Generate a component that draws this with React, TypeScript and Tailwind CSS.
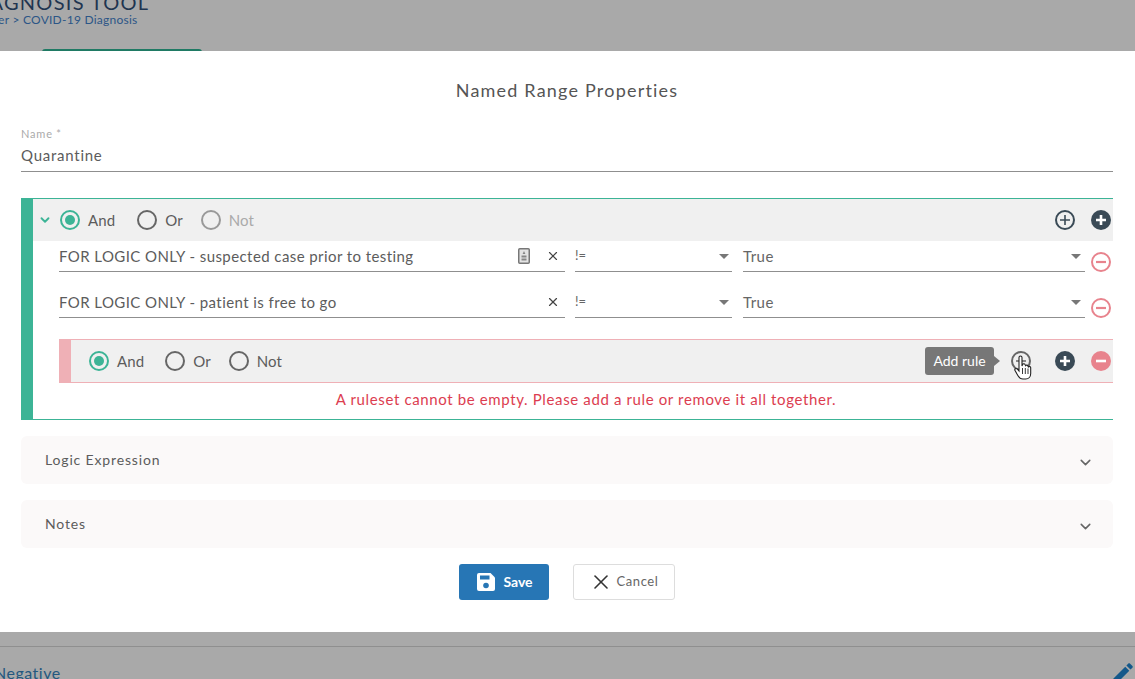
import { ChevronDown, X } from "lucide-react";

const FONT = "font-['Lato','Noto_Sans',sans-serif]";

function Radio({ label, checked, muted }: { label: string; checked?: boolean; muted?: boolean }) {
  return (
    <div className="flex items-center gap-[8px]">
      <span
        className={`flex h-[20px] w-[20px] items-center justify-center rounded-full border-2 ${
          checked ? "border-[#3cb496]" : muted ? "border-[#999999]" : "border-[#666666]"
        }`}
      >
        {checked && <span className="h-[10px] w-[10px] rounded-full bg-[#3cb496]" />}
      </span>
      <span className={`text-[15px] tracking-[0.1px] ${muted ? "text-[#aaaaaa]" : "text-[#5c5c5c]"}`}>{label}</span>
    </div>
  );
}

function PlusOutline({ color = "#3a4a56" }: { color?: string }) {
  return (
    <svg width="20" height="20" viewBox="0 0 20 20" fill="none" stroke={color} strokeWidth="2">
      <circle cx="10" cy="10" r="9" />
      <path d="M10 5v10M5 10h10" strokeWidth="1.6" />
    </svg>
  );
}

function PlusSolid() {
  return (
    <svg width="20" height="20" viewBox="0 0 20 20">
      <circle cx="10" cy="10" r="10" fill="#3a4a56" />
      <path d="M10 5v10M5 10h10" stroke="#fff" strokeWidth="2.6" />
    </svg>
  );
}

function MinusOutline() {
  return (
    <svg width="20" height="20" viewBox="0 0 20 20" fill="none" stroke="#e8838d" strokeWidth="2">
      <circle cx="10" cy="10" r="9" />
      <path d="M5 10h10" strokeWidth="2.2" />
    </svg>
  );
}

function MinusSolid() {
  return (
    <svg width="20" height="20" viewBox="0 0 20 20">
      <circle cx="10" cy="10" r="10" fill="#e8838d" />
      <path d="M5 10h10" stroke="#fff" strokeWidth="2.6" />
    </svg>
  );
}

function Caret() {
  return <span className="h-0 w-0 border-x-[5px] border-t-[5px] border-x-transparent border-t-[#777777]" />;
}

function Rule({ field, badge }: { field: string; badge?: boolean }) {
  return (
    <div className="flex h-[46px] items-start pl-[26px]">
      <div className="flex h-[31px] w-[506px] items-center border-b border-[#8f8f8f] text-[15px] tracking-[0.42px] text-[#5c5c5c]">
        <span className="flex-1">{field}</span>
        {badge && (
          <svg width="12" height="16" viewBox="0 0 12 16" className="mr-[16px]">
            <rect x="0.75" y="0.75" width="10.5" height="14.5" rx="1" fill="#e4e4e4" stroke="#777777" strokeWidth="1.5" />
            <path d="M6 3l1.4 3H4.600z M3.500 7.500h5v2h-5z M3.500 10.500h5v2h-5z" fill="#888888" />
          </svg>
        )}
        <X size={14} strokeWidth={2} className="mr-[5px] text-[#444444]" />
      </div>
      <div className="ml-[10px] flex h-[31px] w-[157px] items-center justify-between border-b border-[#8f8f8f] pr-[3px] text-[13px] text-[#666666]">
        <span>!=</span>
        <Caret />
      </div>
      <div className="ml-[11px] flex h-[31px] w-[342px] items-center justify-between border-b border-[#8f8f8f] pr-[4px] text-[15px] tracking-[0.45px] text-[#666666]">
        <span>True</span>
        <Caret />
      </div>
      <div className="ml-[6px] mt-[11px]">
        <MinusOutline />
      </div>
    </div>
  );
}

function Accordion({ label }: { label: string }) {
  return (
    <div className="flex h-[48px] items-center justify-between rounded-[6px] bg-[#fbf9f9] pb-[1px] pl-[24px] pr-[19px] text-[14px] tracking-[0.85px] text-[#5c5c5c]">
      <span>{label}</span>
      <ChevronDown size={17} strokeWidth={2.2} className="mt-[6px] text-[#666666]" />
    </div>
  );
}

export default function App() {
  return (
    <div className={`flex h-[679px] w-[1135px] flex-col overflow-hidden bg-[#a9a9a9] ${FONT}`}>
      {/* Page behind the dialog */}
      <div className="h-[51px] shrink-0 overflow-hidden">
        <div className="-ml-[34px] -mt-[10px] text-[20px] leading-[24px] tracking-[1.3px] text-[#1f3550]">DIAGNOSIS TOOL</div>
        <div className="-ml-[28px] -mt-[2px] text-[12px] leading-[16px] tracking-[0.25px] text-[#2c5687]">Center &gt; COVID-19 Diagnosis</div>
        <div className="ml-[42px] mt-[21px] h-[3px] w-[160px] rounded-t-[4px] bg-[#1f7a64]" />
      </div>

      {/* Dialog */}
      <div className="flex h-[581px] shrink-0 flex-col bg-white px-[21px] pr-[22px]">
        <h2 className="pt-[27px] text-center text-[18px] leading-[24px] tracking-[1.2px] text-[#555555]">Named Range Properties</h2>

        <div className="mt-[25px] text-[11px] leading-[14px] tracking-[0.8px] text-[#aaaaaa]">Name *</div>
        <div className="flex h-[31px] items-center border-b border-[#8f8f8f] pb-[1px] text-[15px] tracking-[0.75px] text-[#5c5c5c]">Quarantine</div>

        {/* Outer ruleset */}
        <div className="mt-[26px] h-[222px] border-y border-[#3cb496] border-l-[12px]">
          <div className="flex h-[42px] items-center justify-between bg-[#f0f0f0] pr-[2px]">
            <div className="flex items-center">
              <ChevronDown size={14} strokeWidth={3.2} className="ml-[5px] mr-[8px] text-[#3cb496]" />
              <Radio label="And" checked />
              <div className="ml-[22px]">
                <Radio label="Or" />
              </div>
              <div className="ml-[18px]">
                <Radio label="Not" muted />
              </div>
            </div>
            <div className="flex items-center gap-[16px]">
              <PlusOutline />
              <PlusSolid />
            </div>
          </div>

          <Rule field="FOR LOGIC ONLY - suspected case prior to testing" badge />
          <Rule field="FOR LOGIC ONLY - patient is free to go" />

          {/* Nested ruleset */}
          <div className="relative ml-[26px] mt-[6px] flex h-[44px] items-center justify-between border-y border-[#efb0b6] border-l-[12px] bg-[#f0f0f0] pl-[18px] pr-[2px]">
            <div className="flex items-center">
              <Radio label="And" checked />
              <div className="ml-[21px]">
                <Radio label="Or" />
              </div>
              <div className="ml-[18px]">
                <Radio label="Not" />
              </div>
            </div>
            <div className="flex items-center">
              <PlusOutline color="#666666" />
              <div className="ml-[24px]">
                <PlusSolid />
              </div>
              <div className="ml-[16px]">
                <MinusSolid />
              </div>
            </div>
            <div className="absolute left-[854px] top-[7px] flex h-[28px] w-[69px] items-center justify-center rounded-[3px] bg-[#777777] pb-[1px] text-[14px] text-white">
              Add rule
              <span className="absolute left-full h-0 w-0 border-y-[5px] border-l-[6px] border-y-transparent border-l-[#777777]" />
            </div>
            <svg width="20" height="28" viewBox="0 0 20 26" className="absolute left-[942px] top-[14px]">
              <path
                d="M6 2.500a1.500 1.500 0 0 1 3 0V11l.6-1.500a1.400 1.400 0 0 1 2.600.4l.4.800a1.300 1.300 0 0 1 2.400.6l.4.700a1.300 1.300 0 0 1 2.300 1v5.500c0 3-2 5.500-5 5.500H10c-2.500 0-3.800-1.200-5-3.300L2 15.500c-.8-1.400 1-2.600 2.200-1.500L6 16z"
                fill="#ffffff"
                stroke="#222222"
                strokeWidth="1.100"
              />
              <path d="M9.500 13v6M12.300 13v6M15 13.500V19" stroke="#222222" strokeWidth="0.900" />
            </svg>
          </div>

          <div className="ml-[26px] flex h-[33px] items-center justify-center text-[15px] tracking-[0.63px] text-[#dc3d50]">
            A ruleset cannot be empty. Please add a rule or remove it all together.
          </div>
        </div>

        <div className="mt-[16px] flex flex-col gap-[16px]">
          <Accordion label="Logic Expression" />
          <Accordion label="Notes" />
        </div>

        <div className="mt-[16px] flex justify-center gap-[24px]">
          <button className="flex h-[36px] w-[90px] items-center justify-center gap-[8px] rounded-[3px] bg-[#2776b5] pb-[1px] pl-[2px] text-[14px] font-bold text-white">
            <svg width="18" height="18" viewBox="0 0 18 18">
              <path d="M2 0h11.500L18 4.500V16a2 2 0 0 1-2 2H2a2 2 0 0 1-2-2V2a2 2 0 0 1 2-2z" fill="#fff" />
              <rect x="3" y="2.500" width="9.500" height="4" fill="#2776b5" />
              <circle cx="9" cy="12.500" r="2.800" fill="#2776b5" />
            </svg>
            Save
          </button>
          <button className="flex h-[36px] w-[102px] items-center justify-center gap-[3px] rounded-[3px] border border-[#dddddd] bg-white text-[13px] tracking-[0.6px] text-[#666666]">
            <X size={24} strokeWidth={1.6} className="text-[#333333]" />
            Cancel
          </button>
        </div>
      </div>

      {/* Page below the dialog */}
      <div className="mt-[14px] h-px shrink-0 bg-[#8f8f8f]" />
      <div className="-ml-[6px] -mr-[1px] flex items-start justify-between">
        <span className="mt-[16px] text-[16px] leading-[20px] tracking-[0.5px] text-[#24587f]">Negative</span>
        <svg width="26" height="26" viewBox="0 0 24 24" className="mt-[13px]" fill="#14588a">
          <path d="M3 17.250V21h3.750L17.810 9.940l-3.750-3.750L3 17.250zM20.710 7.040c.39-.39.39-1.020 0-1.410l-2.340-2.340c-.39-.39-1.020-.39-1.410 0l-1.830 1.830 3.750 3.750 1.830-1.830z" />
        </svg>
      </div>
    </div>
  );
}
